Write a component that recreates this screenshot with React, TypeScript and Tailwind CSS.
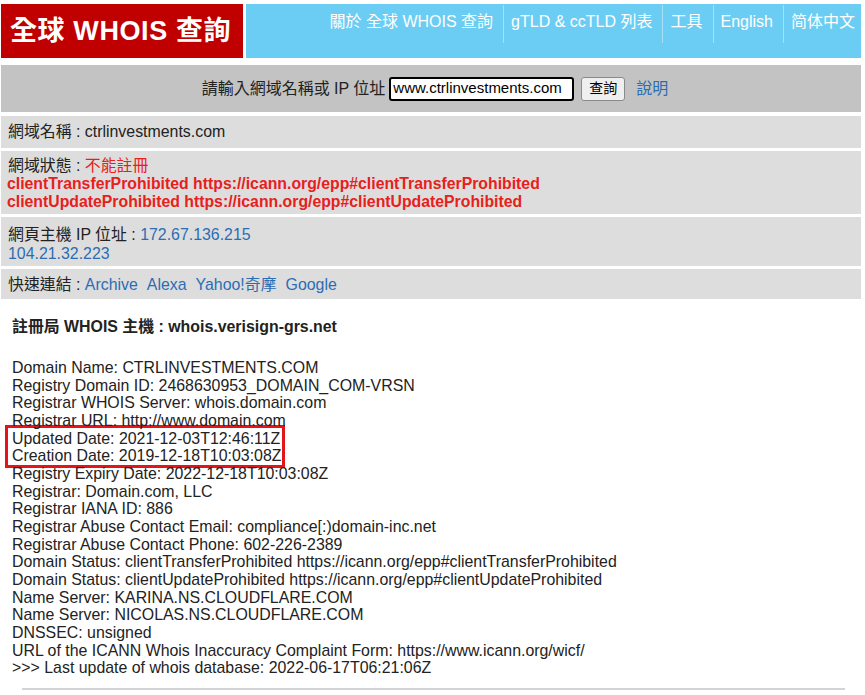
const FONT = "font-['Liberation_Sans','Noto_Sans_CJK_TC',sans-serif]";

const whoisLines = [
  "Domain Name: CTRLINVESTMENTS.COM",
  "Registry Domain ID: 2468630953_DOMAIN_COM-VRSN",
  "Registrar WHOIS Server: whois.domain.com",
  "Registrar URL: http://www.domain.com",
];

const whoisRest = [
  "Registry Expiry Date: 2022-12-18T10:03:08Z",
  "Registrar: Domain.com, LLC",
  "Registrar IANA ID: 886",
  "Registrar Abuse Contact Email: compliance[:)domain-inc.net",
  "Registrar Abuse Contact Phone: 602-226-2389",
  "Domain Status: clientTransferProhibited https://icann.org/epp#clientTransferProhibited",
  "Domain Status: clientUpdateProhibited https://icann.org/epp#clientUpdateProhibited",
  "Name Server: KARINA.NS.CLOUDFLARE.COM",
  "Name Server: NICOLAS.NS.CLOUDFLARE.COM",
  "DNSSEC: unsigned",
  "URL of the ICANN Whois Inaccuracy Complaint Form: https://www.icann.org/wicf/",
  ">>> Last update of whois database: 2022-06-17T06:21:06Z",
];

const navItems = ["關於 全球 WHOIS 查詢", "gTLD & ccTLD 列表", "工具", "English", "简体中文"];

export default function App() {
  return (
    <div className={`w-[865px] h-[695px] overflow-hidden bg-white text-[#222] ${FONT}`}>
      {/* Header */}
      <div className="flex gap-[3px] pt-[4px] pl-[1px] pr-[4px]">
        <div className="w-[242px] h-[54px] bg-[#c00000] flex items-center pl-[9px]">
          <span className="text-white font-bold text-[27px] leading-none tracking-[0.6px] whitespace-nowrap">全球 WHOIS 查詢</span>
        </div>
        <div className="flex-1 h-[54px] bg-[#6ccdf4] flex justify-end items-start pt-[1px] pr-[1px]">
          {navItems.map((item, i) => {
            const last = i === navItems.length - 1;
            return (
              <div
                key={item}
                className={`h-[38px] pl-[7px] text-white text-[16px] leading-[33px] whitespace-nowrap ${last ? "pr-[5px]" : "pr-[10px]"} ${i > 0 ? "border-l border-[#a8e0f7]" : ""}`}
              >
                {item}
              </div>
            );
          })}
        </div>
      </div>

      {/* Search bar */}
      <div className="mt-[7px] mx-[1px] mr-[4px] h-[47px] bg-[#c3c3c3] flex items-center justify-center text-[16px]">
        <span className="ml-[8px]">請輸入網域名稱或 IP 位址</span>
        <div className="ml-[4px] w-[185px] h-[24px] border-2 border-black rounded-[3px] bg-white flex items-center pl-[2px] text-[15px] text-black">
          www.ctrlinvestments.com
        </div>
        <div className="ml-[7px] w-[44px] h-[24px] border border-[#8a8a8a] rounded-[3px] bg-[#efefef] flex items-center justify-center text-[14px] text-black">
          查詢
        </div>
        <span className="ml-[11px] text-[#2a6db5]">說明</span>
      </div>

      {/* Info rows */}
      <div className="mx-[1px] mr-[4px] flex flex-col gap-[3px] mt-[4px] text-[15.9px] leading-[18px]">
        <div className="h-[32px] bg-[#dddddd] pl-[7px] pt-[7px]">
          網域名稱 : ctrlinvestments.com
        </div>
        <div className="h-[63px] bg-[#dddddd] pl-[6px] pt-[6px]">
          <div className="pl-[1px]">
            網域狀態 : <span className="text-[#e8201c]">不能註冊</span>
          </div>
          <div className="text-[#e8201c] font-bold text-[15.8px]">clientTransferProhibited https://icann.org/epp#clientTransferProhibited</div>
          <div className="text-[#e8201c] font-bold text-[15.8px]">clientUpdateProhibited https://icann.org/epp#clientUpdateProhibited</div>
        </div>
        <div className="h-[49px] bg-[#dddddd] pl-[7px] pt-[8px] leading-[19px]">
          <div>
            網頁主機 IP 位址 : <span className="text-[#2a6db5]">172.67.136.215</span>
          </div>
          <div className="text-[#2a6db5]">104.21.32.223</div>
        </div>
        <div className="h-[30px] bg-[#dddddd] pl-[7px] pt-[7px]">
          快速連結 :{" "}
          <span className="text-[#2a6db5]">Archive</span>
          <span className="text-[#2a6db5] ml-[9px]">Alexa</span>
          <span className="text-[#2a6db5] ml-[9px]">Yahoo!奇摩</span>
          <span className="text-[#2a6db5] ml-[9px]">Google</span>
        </div>
      </div>

      {/* WHOIS record */}
      <div className="pl-[12px] pt-[19px] text-[15.9px] whitespace-nowrap">
        <div className="font-bold leading-[18px]">註冊局 WHOIS 主機 : whois.verisign-grs.net</div>
        <div className="mt-[23px] leading-[17.65px]">
          {whoisLines.map((l) => (
            <div key={l}>{l}</div>
          ))}
          <div className="-mt-[5px] -mb-[3px] -ml-[7px] w-[280px] border-[3px] border-[#e3151a] pl-[4px] pt-[2px]">
            <div>Updated Date: 2021-12-03T12:46:11Z</div>
            <div>Creation Date: 2019-12-18T10:03:08Z</div>
          </div>
          {whoisRest.map((l) => (
            <div key={l}>{l}</div>
          ))}
        </div>
        <div className="mt-[11px] ml-[10px] w-[823px] h-[2px] bg-[#d4d4d4]" />
      </div>
    </div>
  );
}
